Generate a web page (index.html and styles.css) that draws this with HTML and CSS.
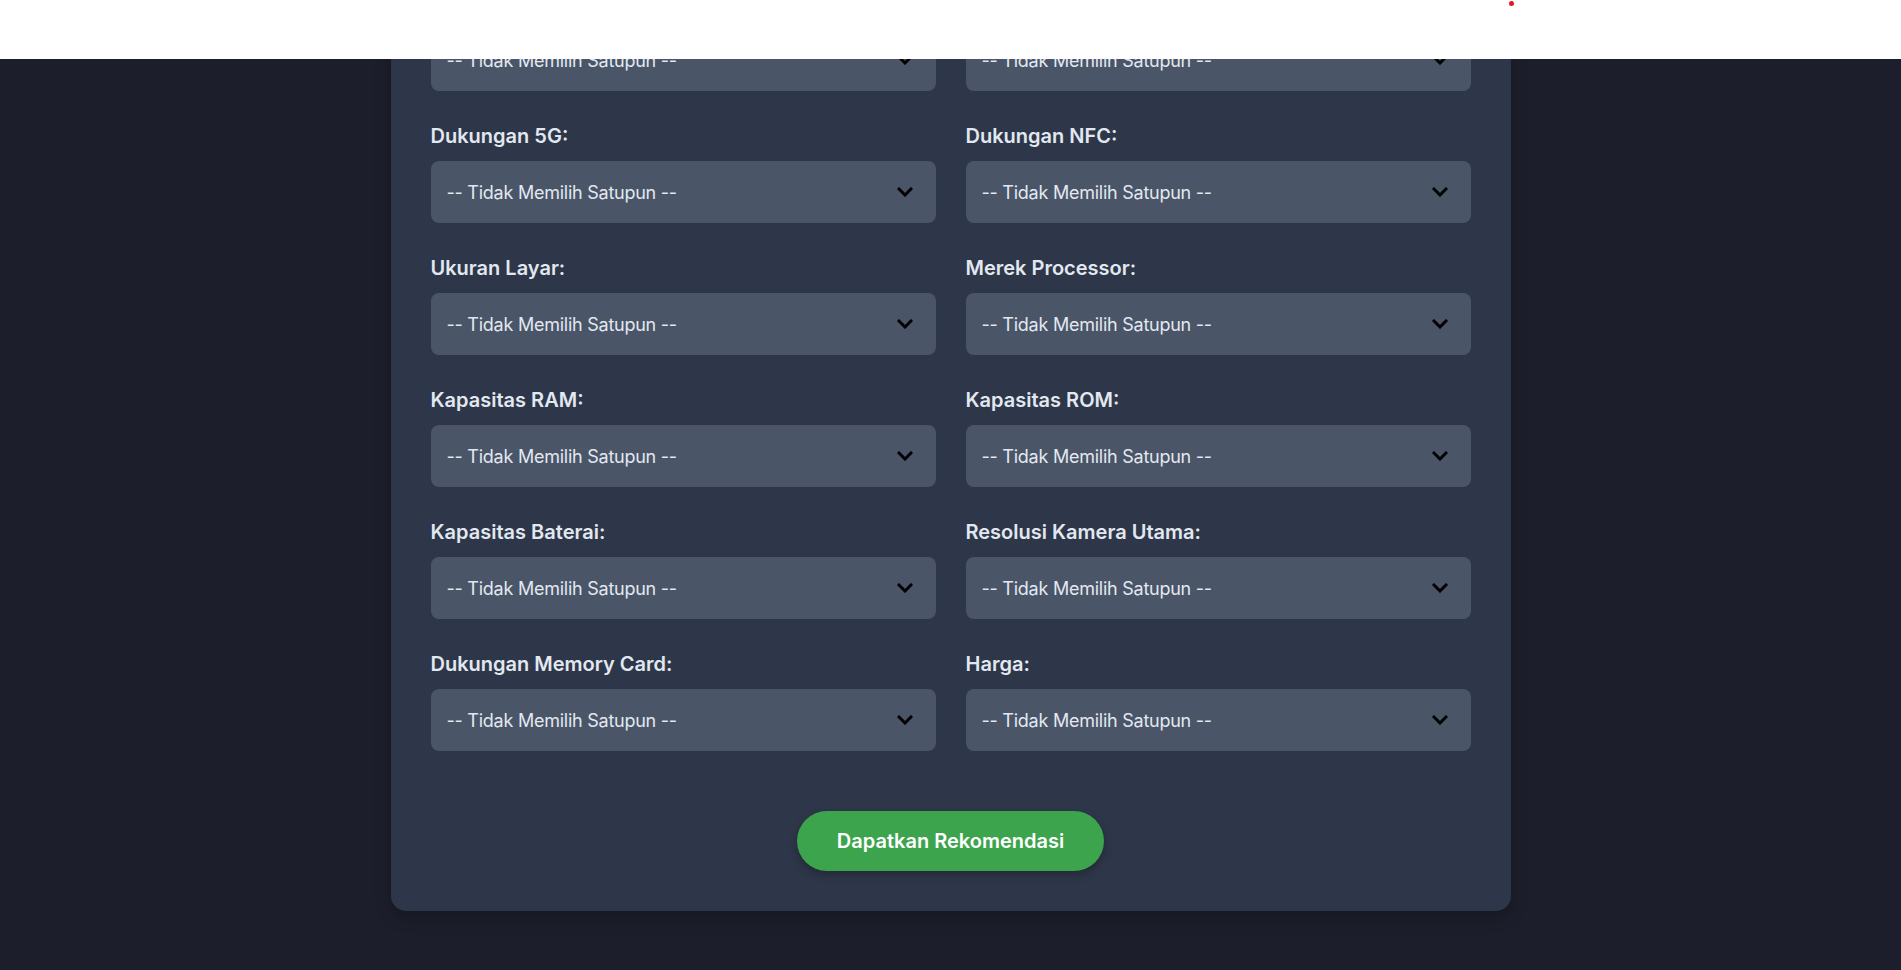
FILE: index.html
```html
<!DOCTYPE html>
<html lang="id">
<head>
<meta charset="utf-8">
<title>Rekomendasi HP</title>
<link rel="stylesheet" href="styles.css">
</head>
<body>
<header class="topbar"><span class="topbar-dot"></span></header>
<main class="page">
  <form class="card">
    <div class="grid">
      <div class="field">
        <div class="select-wrap">
          <select class="select"><option>-- Tidak Memilih Satupun --</option></select>
          <svg class="chev" viewBox="0 0 16 10" aria-hidden="true"><path d="M2 2l6 6 6-6"/></svg>
        </div>
      </div>
      <div class="field">
        <div class="select-wrap">
          <select class="select"><option>-- Tidak Memilih Satupun --</option></select>
          <svg class="chev" viewBox="0 0 16 10" aria-hidden="true"><path d="M2 2l6 6 6-6"/></svg>
        </div>
      </div>

      <div class="field">
        <label class="label">Dukungan 5G:</label>
        <div class="select-wrap">
          <select class="select"><option>-- Tidak Memilih Satupun --</option></select>
          <svg class="chev" viewBox="0 0 16 10" aria-hidden="true"><path d="M2 2l6 6 6-6"/></svg>
        </div>
      </div>
      <div class="field">
        <label class="label">Dukungan NFC:</label>
        <div class="select-wrap">
          <select class="select"><option>-- Tidak Memilih Satupun --</option></select>
          <svg class="chev" viewBox="0 0 16 10" aria-hidden="true"><path d="M2 2l6 6 6-6"/></svg>
        </div>
      </div>

      <div class="field">
        <label class="label">Ukuran Layar:</label>
        <div class="select-wrap">
          <select class="select"><option>-- Tidak Memilih Satupun --</option></select>
          <svg class="chev" viewBox="0 0 16 10" aria-hidden="true"><path d="M2 2l6 6 6-6"/></svg>
        </div>
      </div>
      <div class="field">
        <label class="label">Merek Processor:</label>
        <div class="select-wrap">
          <select class="select"><option>-- Tidak Memilih Satupun --</option></select>
          <svg class="chev" viewBox="0 0 16 10" aria-hidden="true"><path d="M2 2l6 6 6-6"/></svg>
        </div>
      </div>

      <div class="field">
        <label class="label">Kapasitas RAM:</label>
        <div class="select-wrap">
          <select class="select"><option>-- Tidak Memilih Satupun --</option></select>
          <svg class="chev" viewBox="0 0 16 10" aria-hidden="true"><path d="M2 2l6 6 6-6"/></svg>
        </div>
      </div>
      <div class="field">
        <label class="label">Kapasitas ROM:</label>
        <div class="select-wrap">
          <select class="select"><option>-- Tidak Memilih Satupun --</option></select>
          <svg class="chev" viewBox="0 0 16 10" aria-hidden="true"><path d="M2 2l6 6 6-6"/></svg>
        </div>
      </div>

      <div class="field">
        <label class="label">Kapasitas Baterai:</label>
        <div class="select-wrap">
          <select class="select"><option>-- Tidak Memilih Satupun --</option></select>
          <svg class="chev" viewBox="0 0 16 10" aria-hidden="true"><path d="M2 2l6 6 6-6"/></svg>
        </div>
      </div>
      <div class="field">
        <label class="label">Resolusi Kamera Utama:</label>
        <div class="select-wrap">
          <select class="select"><option>-- Tidak Memilih Satupun --</option></select>
          <svg class="chev" viewBox="0 0 16 10" aria-hidden="true"><path d="M2 2l6 6 6-6"/></svg>
        </div>
      </div>

      <div class="field">
        <label class="label">Dukungan Memory Card:</label>
        <div class="select-wrap">
          <select class="select"><option>-- Tidak Memilih Satupun --</option></select>
          <svg class="chev" viewBox="0 0 16 10" aria-hidden="true"><path d="M2 2l6 6 6-6"/></svg>
        </div>
      </div>
      <div class="field">
        <label class="label">Harga:</label>
        <div class="select-wrap">
          <select class="select"><option>-- Tidak Memilih Satupun --</option></select>
          <svg class="chev" viewBox="0 0 16 10" aria-hidden="true"><path d="M2 2l6 6 6-6"/></svg>
        </div>
      </div>
    </div>
    <div class="actions">
      <button type="button" class="btn">Dapatkan Rekomendasi</button>
    </div>
  </form>
</main>
</body>
</html>
```

FILE: styles.css
```css
* { box-sizing: border-box; }

html, body {
  margin: 0;
  padding: 0;
  height: 100%;
  overflow: hidden;
}

body {
  background: #1c1f2b;
  font-family: Inter, "Noto Sans", "Liberation Sans", sans-serif;
  color: #e2e8f0;
}

.topbar {
  position: fixed;
  top: 0;
  left: 0;
  right: 0;
  height: 59px;
  background: #ffffff;
  z-index: 10;
}

.topbar-dot {
  position: absolute;
  left: 1509px;
  top: 1px;
  width: 5px;
  height: 5px;
  border-radius: 50%;
  background: #e3191f;
}

.page {
  padding: 0;
}

.card {
  width: 1120px;
  margin: -11px auto 0;
  padding: 40px 40px 40px;
  background: #2e3649;
  border-radius: 15px;
  box-shadow: 0 6px 16px rgba(0, 0, 0, 0.25);
}

.grid {
  display: grid;
  grid-template-columns: 1fr 1fr;
  column-gap: 30px;
  row-gap: 31px;
}

.field {
  display: flex;
  flex-direction: column;
}

.label {
  display: block;
  font-size: 20px;
  line-height: 28px;
  font-weight: 600;
  color: #e2e8f0;
  margin-bottom: 11px;
}

.select-wrap {
  position: relative;
}

.select {
  display: block;
  width: 100%;
  height: 62px;
  padding: 0 50px 0 16px;
  border: none;
  border-radius: 8px;
  background: #4a5568;
  color: #e2e8f0;
  font-family: Inter, "Noto Sans", "Liberation Sans", sans-serif;
  font-size: 18px;
  letter-spacing: -0.25px;
  -webkit-appearance: none;
  appearance: none;
  outline: none;
}

.chev {
  position: absolute;
  right: 23px;
  top: 26px;
  width: 16px;
  height: 10px;
  pointer-events: none;
}

.chev path {
  fill: none;
  stroke: #000;
  stroke-width: 3;
  stroke-linecap: square;
}

.actions {
  display: flex;
  justify-content: center;
  margin-top: 60px;
}

.btn {
  height: 60px;
  padding: 0 40px;
  border: none;
  border-radius: 30px;
  background: #3ca44d;
  color: #ffffff;
  font-family: Inter, "Noto Sans", "Liberation Sans", sans-serif;
  font-size: 20px;
  font-weight: 600;
  box-shadow: 0 4px 8px rgba(0, 0, 0, 0.25);
  cursor: pointer;
}
```
